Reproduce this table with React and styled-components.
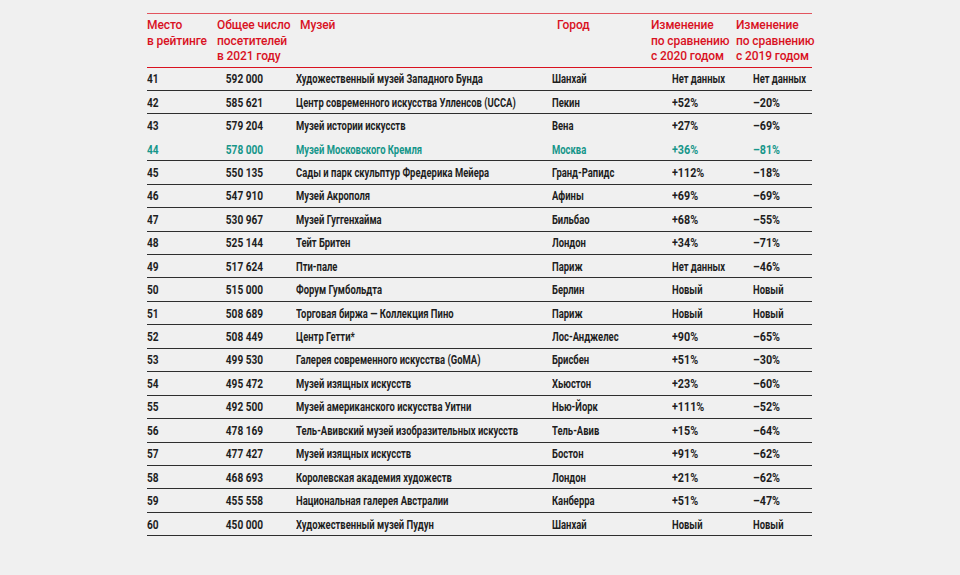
import React from "react";
import styled, { createGlobalStyle } from "styled-components";

const Global = createGlobalStyle`
  html, body { margin: 0; padding: 0; background: #f0f0f0; }
  body { font-family: "Liberation Sans", Arial, sans-serif; }
`;

const COLS = "70px 79px 256px 99px 85px 76px";

const Page = styled.div`
  padding: 13px 0 0 147px;
`;

const Table = styled.div`
  width: 665px;
  border-top: 1px solid #e2545e;
`;

const HeaderRow = styled.div`
  display: grid;
  grid-template-columns: ${COLS};
  padding: 4px 0 2px;
  border-bottom: 1.5px solid #d9121f;
`;

const HeadCell = styled.div`
  font-family: Roboto, "Liberation Sans", Arial, sans-serif;
  font-weight: 500;
  font-size: 12px;
  letter-spacing: -0.1px;
  line-height: 15.5px;
  white-space: nowrap;
  color: #d9121f;
  padding-left: ${(p) => p.$pl || 0}px;
`;

const Row = styled.div`
  display: grid;
  grid-template-columns: ${COLS};
  align-items: center;
  height: 23.45px;
  box-sizing: border-box;
  border-bottom: ${(p) => (p.$noBorder ? "1.5px solid transparent" : "1.5px solid #2e2e2e")};
  color: ${(p) => (p.$hl ? "#16968a" : "#1e1e1e")};
  font-family: Roboto, "Liberation Sans", Arial, sans-serif;
  font-weight: 700;
  font-size: 12.5px;
  white-space: nowrap;
`;

const Cell = styled.div`
  padding-left: ${(p) => p.$pl || 0}px;
  padding-right: ${(p) => p.$pr || 0}px;
  text-align: ${(p) => p.$align || "left"};
`;

const Narrow = styled.span`
  display: inline-block;
  transform: scaleX(${(p) => p.$scale});
  transform-origin: ${(p) => (p.$right ? "right" : "left")} center;
`;

const scaleFor = (v) => {
  if (/^[+–-]/.test(v)) return 0.86;
  if (/^\d/.test(v)) return 0.81;
  return 0.755;
};

const T = ({ v, right }) => (
  <Narrow $scale={scaleFor(v)} $right={right}>{v}</Narrow>
);

const data = [
  ["41", "592 000", "Художественный музей Западного Бунда", "Шанхай", "Нет данных", "Нет данных"],
  ["42", "585 621", "Центр современного искусства Улленсов (UCCA)", "Пекин", "+52%", "–20%"],
  ["43", "579 204", "Музей истории искусств", "Вена", "+27%", "–69%"],
  ["44", "578 000", "Музей Московского Кремля", "Москва", "+36%", "–81%"],
  ["45", "550 135", "Сады и парк скульптур Фредерика Мейера", "Гранд-Рапидс", "+112%", "–18%"],
  ["46", "547 910", "Музей Акрополя", "Афины", "+69%", "–69%"],
  ["47", "530 967", "Музей Гуггенхайма", "Бильбао", "+68%", "–55%"],
  ["48", "525 144", "Тейт Бритен", "Лондон", "+34%", "–71%"],
  ["49", "517 624", "Пти-пале", "Париж", "Нет данных", "–46%"],
  ["50", "515 000", "Форум Гумбольдта", "Берлин", "Новый", "Новый"],
  ["51", "508 689", "Торговая биржа — Коллекция Пино", "Париж", "Новый", "Новый"],
  ["52", "508 449", "Центр Гетти*", "Лос-Анджелес", "+90%", "–65%"],
  ["53", "499 530", "Галерея современного искусства (GoMA)", "Брисбен", "+51%", "–30%"],
  ["54", "495 472", "Музей изящных искусств", "Хьюстон", "+23%", "–60%"],
  ["55", "492 500", "Музей американского искусства Уитни", "Нью-Йорк", "+111%", "–52%"],
  ["56", "478 169", "Тель-Авивский музей изобразительных искусств", "Тель-Авив", "+15%", "–64%"],
  ["57", "477 427", "Музей изящных искусств", "Бостон", "+91%", "–62%"],
  ["58", "468 693", "Королевская академия художеств", "Лондон", "+21%", "–62%"],
  ["59", "455 558", "Национальная галерея Австралии", "Канберра", "+51%", "–47%"],
  ["60", "450 000", "Художественный музей Пудун", "Шанхай", "Новый", "Новый"],
];

export default function App() {
  return (
    <Page>
      <Global />
      <Table>
        <HeaderRow>
          <HeadCell>Место<br />в рейтинге</HeadCell>
          <HeadCell>Общее число<br />посетителей<br />в 2021 году</HeadCell>
          <HeadCell $pl={4}>Музей</HeadCell>
          <HeadCell $pl={5}>Город</HeadCell>
          <HeadCell>Изменение<br />по сравнению<br />с 2020 годом</HeadCell>
          <HeadCell>Изменение<br />по сравнению<br />с 2019 годом</HeadCell>
        </HeaderRow>
        {data.map((r) => (
          <Row key={r[0]} $hl={r[0] === "44"} $noBorder={r[0] === "43"}>
            <Cell><T v={r[0]} /></Cell>
            <Cell $align="right" $pr={37}><T v={r[1]} right /></Cell>
            <Cell><T v={r[2]} /></Cell>
            <Cell><T v={r[3]} /></Cell>
            <Cell $pl={21}><T v={r[4]} /></Cell>
            <Cell $pl={17}><T v={r[5]} /></Cell>
          </Row>
        ))}
      </Table>
    </Page>
  );
}
